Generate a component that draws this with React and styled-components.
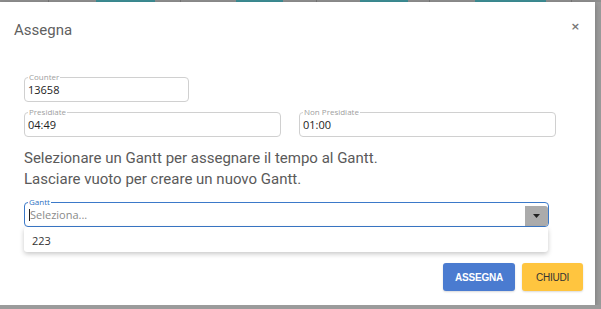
import React from "react";
import styled, { createGlobalStyle } from "styled-components";

const GlobalStyle = createGlobalStyle`
  body {
    margin: 0;
    background: #9b9b9b;
    font-family: Roboto, "Liberation Sans", sans-serif;
  }
`;

const TopStrip = styled.div`
  height: 2px;
  position: relative;
  background: #8f8f8f;
  display: flex;
  overflow: hidden;
`;
const Peek = styled.span`
  height: 2px;
  margin-left: ${(p) => p.left}px;
  width: ${(p) => p.w}px;
  background: ${(p) => (p.teal ? "#3d8e95" : "#777")};
`;

const Modal = styled.div`
  width: 595px;
  height: 303px;
  background: #fff;
  box-shadow: 0 2px 6px rgba(0, 0, 0, 0.25);
  display: flex;
  flex-direction: column;
  position: relative;
`;
const Header = styled.div`
  display: flex;
  justify-content: space-between;
  align-items: flex-start;
  padding: 19px 15px 0 14px;
`;
const Title = styled.div`
  font-size: 15px;
  line-height: 18px;
  color: #5f5f5f;
`;
const Close = styled.div`
  font-family: "DejaVu Sans", sans-serif;
  font-size: 11px;
  font-weight: bold;
  line-height: 10px;
  color: #777;
  margin-top: 1px;
`;

const Body = styled.div`
  padding: 0 24px;
  margin-top: 34px;
  display: flex;
  flex-direction: column;
`;
const Row = styled.div`
  display: flex;
  gap: 18px;
  margin-top: ${(p) => p.mt || 0}px;
`;
const Field = styled.fieldset`
  margin: 0;
  box-sizing: border-box;
  width: ${(p) => p.w}px;
  padding: 0 2px 4px 2px;
  border: 1px solid ${(p) => (p.active ? "#3b79c9" : "#d0d0d0")};
  border-radius: 4px;
  position: relative;
`;
const Legend = styled.legend`
  font-family: "Open Sans", sans-serif;
  font-size: 8px;
  line-height: 8px;
  padding: 0 1px;
  margin-left: 1px;
  color: ${(p) => (p.active ? "#2e6fc2" : "#a0a0a0")};
`;
const Value = styled.div`
  font-family: "Open Sans", sans-serif;
  font-size: 11px;
  line-height: 14px;
  height: 14px;
  padding-top: 2px;
  padding-left: 1px;
  color: #222;
`;
const Placeholder = styled(Value)`
  color: #8a8a8a;
  display: flex;
  align-items: center;
  padding-left: 4px;
`;
const Caret = styled.span`
  width: 1px;
  height: 12px;
  background: #222;
  margin-left: -2px;
`;
const DropButton = styled.div`
  position: absolute;
  right: 0;
  top: 0;
  bottom: 0;
  width: 23px;
  background: #ababab;
  border-radius: 0 3px 3px 0;
  display: flex;
  align-items: center;
  justify-content: center;
`;
const Menu = styled.div`
  position: absolute;
  left: -1px;
  right: 0;
  top: calc(100% + 1px);
  height: 25px;
  background: #fff;
  border-radius: 3px;
  box-shadow: 0 2px 5px rgba(0, 0, 0, 0.22);
  display: flex;
  align-items: center;
  padding: 1px 0 0 8px;
  box-sizing: border-box;
  font-family: "Open Sans", sans-serif;
  font-size: 11px;
  color: #333;
  z-index: 2;
`;

const Info = styled.div`
  margin-top: 11px;
  font-size: 15px;
  line-height: 21px;
  color: #5a5a5a;
`;

const Footer = styled.div`
  display: flex;
  justify-content: flex-end;
  gap: 7px;
  padding-right: 12px;
  margin-top: 36px;
`;
const Button = styled.button`
  height: 28px;
  width: ${(p) => p.w}px;
  border: none;
  border-radius: 3px;
  font-family: "Liberation Sans", Arial, sans-serif;
  font-size: 10px;
  font-weight: ${(p) => (p.primary ? "bold" : "normal")};
  letter-spacing: -0.2px;
  background: ${(p) => (p.primary ? "#4a7bd0" : "#ffc53f")};
  color: ${(p) => (p.primary ? "#fff" : "#333")};
  box-shadow: 0 1px 2px rgba(0, 0, 0, 0.15);
  padding: 0;
`;

const peeks = [
  { left: 48, w: 1 },
  { left: 47, w: 59, teal: true },
  { left: 25, w: 1 },
  { left: 55, w: 47, teal: true },
  { left: 33, w: 1 },
  { left: 43, w: 48, teal: true },
  { left: 21, w: 1 },
  { left: 45, w: 71, teal: true },
  { left: 25, w: 1 },
];

const App = () => {
  return (
    <>
      <GlobalStyle />
      <TopStrip>
        {peeks.map((p, i) => (
          <Peek key={i} left={p.left} w={p.w} teal={p.teal} />
        ))}
      </TopStrip>
      <Modal>
        <Header>
          <Title>Assegna</Title>
          <Close>×</Close>
        </Header>
        <Body>
          <Row>
            <Field w={165}>
              <Legend>Counter</Legend>
              <Value>13658</Value>
            </Field>
          </Row>
          <Row mt={6}>
            <Field w={257}>
              <Legend>Presidiate</Legend>
              <Value>04:49</Value>
            </Field>
            <Field w={257}>
              <Legend>Non Presidiate</Legend>
              <Value>01:00</Value>
            </Field>
          </Row>
          <Info>
            Selezionare un Gantt per assegnare il tempo al Gantt.
            <br />
            Lasciare vuoto per creare un nuovo Gantt.
          </Info>
          <Row mt={8}>
            <Field w={525} active>
              <Legend active>Gantt</Legend>
              <Placeholder>
                <Caret />
                Seleziona...
              </Placeholder>
              <DropButton>
                <svg width="7" height="4" viewBox="0 0 7 4">
                  <path d="M0 0h7L3.5 4z" fill="#222" />
                </svg>
              </DropButton>
              <Menu>223</Menu>
            </Field>
          </Row>
        </Body>
        <Footer>
          <Button primary w={72}>
            ASSEGNA
          </Button>
          <Button w={61}>CHIUDI</Button>
        </Footer>
      </Modal>
    </>
  );
};

export default App;
